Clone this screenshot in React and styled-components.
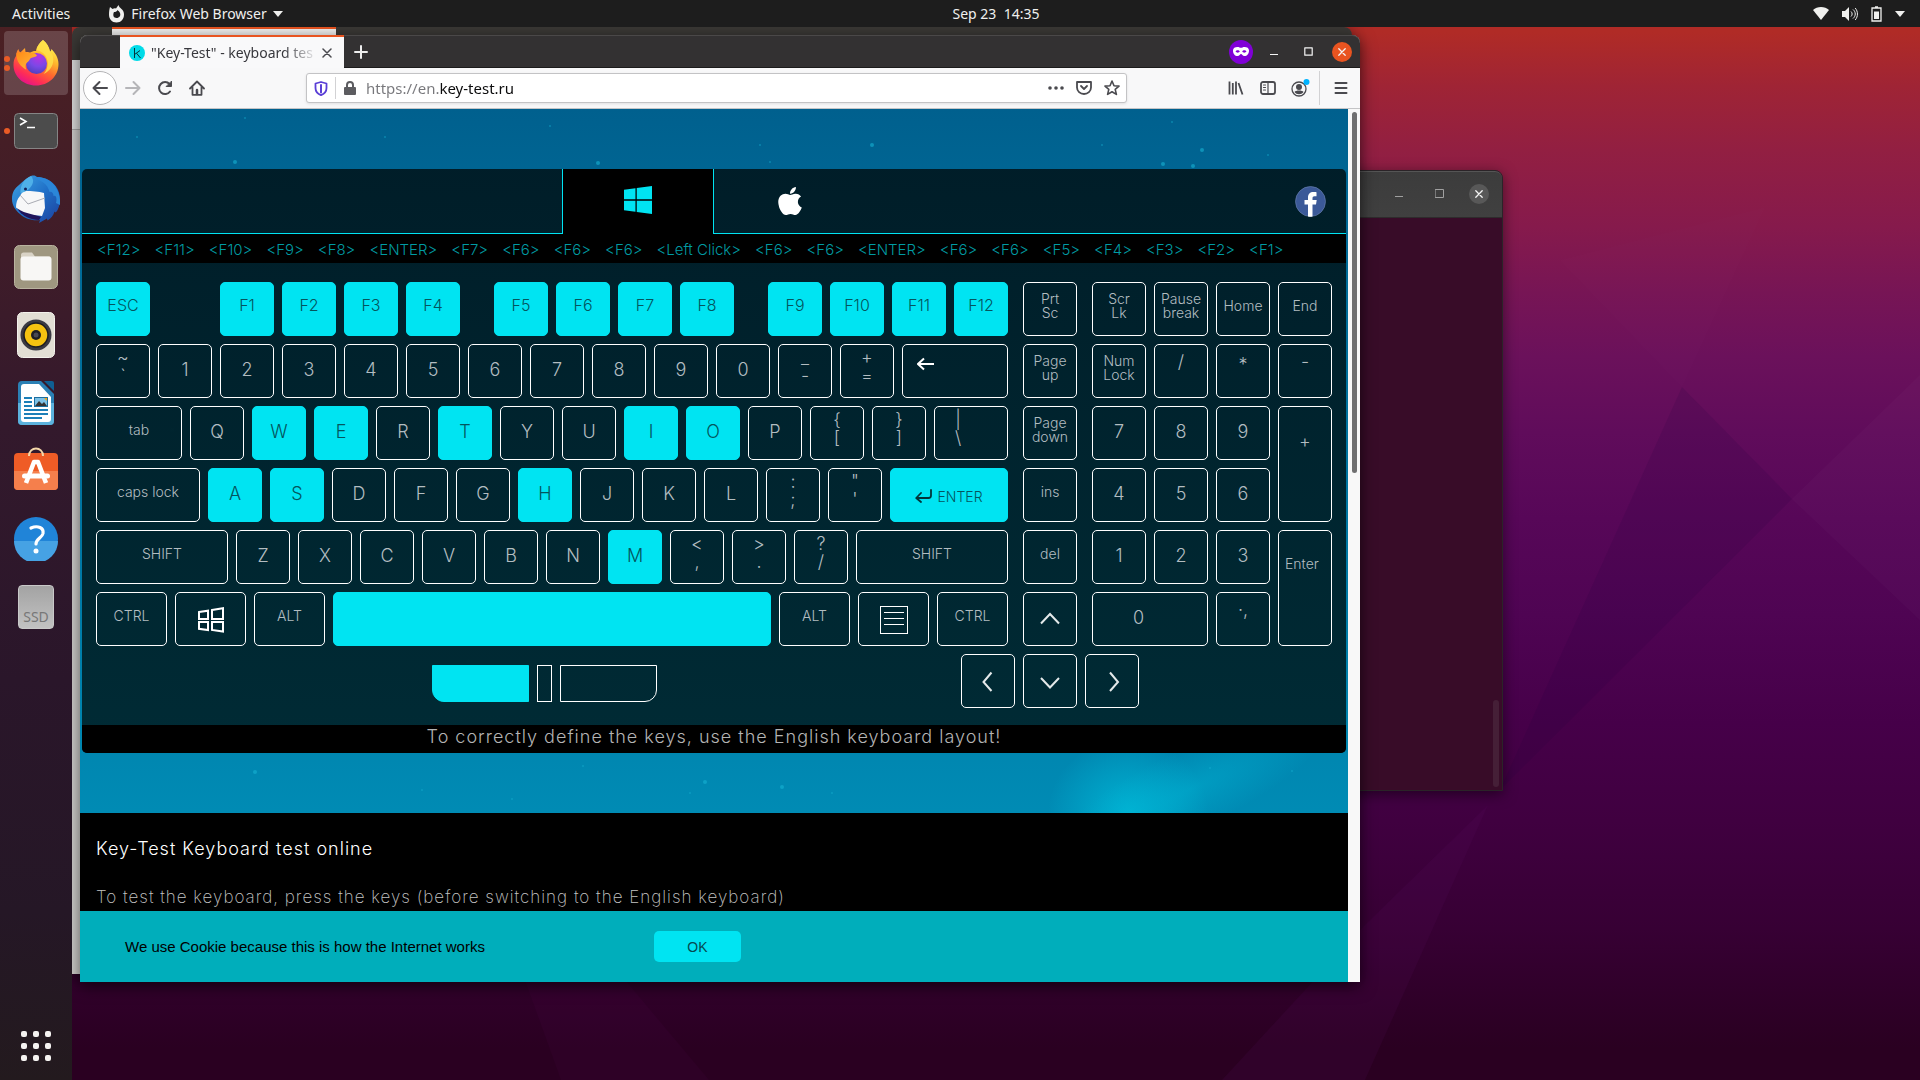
import React from "react";
import styled, { createGlobalStyle, css } from "styled-components";
import { FaWindows, FaApple } from "react-icons/fa";

const CYAN = "#00e4f2";
const UI = `"Noto Sans", "Open Sans", sans-serif`;
const LIGHT = `Inter, "Liberation Sans", sans-serif`;

const Global = createGlobalStyle`
  *, *::before, *::after { box-sizing: border-box; }
  html, body { margin: 0; padding: 0; }
  body { font-family: ${UI}; background: #2b0021; }
  button, input { font: inherit; color: inherit; margin: 0; padding: 0; border: 0; background: none; }
  h1, p { margin: 0; font-weight: inherit; }
  svg { display: block; flex: none; }
`;

/* ---------- desktop ---------- */

const Desktop = styled.div`
  position: relative;
  display: flex;
  flex-direction: column;
  min-height: 100vh;
  overflow: hidden;
  background: linear-gradient(
    #b02b26 3%,
    #9f2435 8%,
    #921f42 14%,
    #861a4c 21%,
    #771555 27%,
    #6b115b 33%,
    #600c5b 40%,
    #570758 48%,
    #4f0453 57%,
    #460049 67%,
    #400040 76%,
    #370034 86%,
    #2a0021 97%
  );
`;

const Wallpaper = styled.svg`
  position: absolute;
  inset: 0;
  width: 100%;
  height: 100%;
`;

const TopBar = styled.header`
  position: relative;
  display: grid;
  grid-template-columns: 1fr auto 1fr;
  align-items: center;
  height: 27px;
  padding: 0 15px 0 12px;
  background: #1d1d1d;
  color: #f0f0ee;
  font-size: 14px;
  line-height: 20px;
  z-index: 3;
`;

const BarGroup = styled.div`
  display: flex;
  align-items: center;
  justify-content: ${(p) => (p.$end ? "flex-end" : "flex-start")};
  gap: ${(p) => (p.$end ? "13px" : "38px")};
`;

const BarButton = styled.button`
  display: flex;
  align-items: center;
  gap: 6px;
  white-space: nowrap;
`;

const Clock = styled(BarButton)`
  padding-left: 75px;
`;

const Body = styled.div`
  position: relative;
  display: flex;
  flex: 1;
`;

const Dock = styled.nav`
  position: relative;
  z-index: 2;
  display: flex;
  flex-direction: column;
  align-items: center;
  gap: 4px;
  width: 72px;
  padding: 4px 4px 2px;
  background: linear-gradient(#4b2023, #3f1c29 22%, #33192c 38%, #2a162a 62%, #251726 84%, #231a1e);
`;

const DockItem = styled.button`
  position: relative;
  display: flex;
  align-items: center;
  justify-content: center;
  width: 64px;
  height: 64px;
  border-radius: 4px;
  background: ${(p) => (p.$active ? "rgba(255,255,255,0.17)" : "transparent")};
  margin-top: ${(p) => (p.$last ? "auto" : "0")};
`;

const Pips = styled.span`
  position: absolute;
  left: 0;
  display: flex;
  flex-direction: column;
  gap: 3px;
`;

const Pip = styled.span`
  width: 6px;
  height: 6px;
  border-radius: 50%;
  background: #ea5b26;
`;

const Workspace = styled.main`
  position: relative;
  flex: 1;
`;

/* ---------- windows ---------- */

const BackWindow = styled.section`
  position: absolute;
  inset: 0 568px 106px 0;
  border-radius: 8px 8px 0 0;
  background: linear-gradient(#3a3835 33px, #dcdcdc 33px, #dcdcdc 102px, #a8a8a8 102px, #a8a8a8 103px, #d0cecc 103px);
  box-shadow: 0 3px 14px rgba(0, 0, 0, 0.45);
`;

const BackTab = styled.div`
  width: 224px;
  height: 33px;
  margin-left: 40px;
  border-top: 2px solid #e95420;
  background: #f0efee;
`;

const Terminal = styled.section`
  position: absolute;
  top: 143px;
  right: 417px;
  display: flex;
  flex-direction: column;
  width: 700px;
  height: 621px;
  border: 1px solid #2b2428;
  border-radius: 8px 8px 0 0;
  background: #380c28;
  box-shadow: 0 3px 14px rgba(0, 0, 0, 0.5);
`;

const TerminalBar = styled.div`
  display: flex;
  align-items: center;
  justify-content: flex-end;
  gap: 20px;
  height: 47px;
  padding: 0 13px 2px 0;
  border-bottom: 1px solid #2e2c2c;
  border-radius: 7px 7px 0 0;
  border-top: 1px solid #555;
  background: linear-gradient(#3c3c3c, #404040);
`;

const TerminalMenu = styled.button`
  width: 40px;
  height: 34px;
  margin-right: 10px;
  border: 1px solid #2c2c2c;
  border-radius: 5px;
`;

const TerminalBody = styled.div`
  display: flex;
  flex: 1;
  align-items: flex-end;
  justify-content: flex-end;
  padding: 3px;
`;

const TerminalThumb = styled.div`
  width: 6px;
  height: 87px;
  border-radius: 3px;
  background: #451f37;
`;

const WinButton = styled.button`
  display: flex;
  align-items: center;
  justify-content: center;
  width: 20px;
  height: 20px;
  border-radius: 50%;
  color: ${(p) => p.$ink || "#f4f4f4"};
  background: ${(p) => p.$fill || "transparent"};
`;

const Browser = styled.section`
  position: absolute;
  inset: 8px 560px auto 8px;
  border-radius: 8px 8px 0 0;
  background: #f9f9fa;
  box-shadow: 0 4px 16px rgba(0, 0, 0, 0.6);
`;

const TitleBar = styled.div`
  display: flex;
  align-items: stretch;
  height: 33px;
  padding-left: 40px;
  border-radius: 8px 8px 0 0;
  background: #333132;
  box-shadow: inset 0 1px 0 #4a4848, inset 0 -1px 0 #1c1b1b;
`;

const Tab = styled.div`
  display: flex;
  align-items: center;
  gap: 6px;
  width: 224px;
  padding: 0 9px;
  border-top: 2px solid #e95420;
  background: #f9f9fa;
  color: #38383d;
  font-size: 14px;
`;

const TabTitle = styled.span`
  flex: 1;
  white-space: nowrap;
  line-height: 20px;
  mask-image: linear-gradient(90deg, #000 82%, rgba(0, 0, 0, 0.15) 100%);
`;

const IconButton = styled.button`
  display: flex;
  align-items: center;
  justify-content: center;
  width: ${(p) => p.$w || 32}px;
  color: ${(p) => p.$ink || "#4a4a4f"};
`;

const WinControls = styled.div`
  display: flex;
  align-items: center;
  gap: 14px;
  margin-left: auto;
  padding-right: 8px;
`;

const Mask = styled.span`
  display: flex;
  align-items: center;
  justify-content: center;
  width: 24px;
  height: 24px;
  margin-right: -3px;
  border-radius: 50%;
  background: #8000d7;
`;

const NavBar = styled.div`
  display: flex;
  align-items: center;
  height: 41px;
  padding: 0 3px;
  border-bottom: 1px solid #c4c4c6;
  background: #f8f8f9;
`;

const BackButton = styled(IconButton)`
  width: 34px;
  height: 34px;
  border: 1px solid #b4b4b6;
  border-radius: 50%;
  background: #fff;
`;

const UrlBar = styled.label`
  display: flex;
  flex: 1;
  align-items: center;
  height: 30px;
  margin: 0 93px;
  border: 1px solid #c3c3c5;
  border-radius: 3px;
  background: #fff;
  box-shadow: 0 1px 3px rgba(0, 0, 0, 0.1);
`;

const UrlInput = styled.input`
  flex: 1;
  min-width: 0;
  height: 26px;
  padding-left: 2px;
  outline: 0;
  font-size: 15px;
  color: transparent;
  background: linear-gradient(90deg, #77777b 75px, #0c0c0d 75px);
  background-clip: text;
`;

const Divider = styled.span`
  width: 1px;
  height: ${(p) => p.$h}px;
  margin: ${(p) => p.$margin || "0"};
  background: #d2d2d4;
`;

const Viewport = styled.div`
  display: flex;
`;

const Page = styled.div`
  position: relative;
  flex: 1;
  min-width: 0;
  background: linear-gradient(#00608e, #006a97 15%, #007aa6 55%, #008cb5 82%);
`;

const Dust = styled.svg`
  position: absolute;
  inset: 0;
  width: 100%;
  height: 704px;
`;

const ScrollTrack = styled.div`
  width: 12px;
  padding: 3px 3px 0 4px;
  background: #f8f8f8;
`;

const ScrollThumb = styled.div`
  height: 361px;
  border-radius: 3px;
  background: #6f6f70;
`;

/* ---------- tester ---------- */

const Panel = styled.section`
  position: relative;
  margin: 60px 2px;
  border-radius: 5px;
  overflow: hidden;
  background: linear-gradient(rgba(0, 27, 37, 0.97), rgba(0, 40, 49, 0.97));
  font-family: ${LIGHT};
`;

const OsTabs = styled.div`
  display: grid;
  grid-template-columns: 480fr 152px 632fr;
  height: 65px;
`;

const OsSide = styled.div`
  display: flex;
  align-items: center;
  justify-content: space-between;
  padding: 0 20px 0 60px;
  border-bottom: 1px solid ${CYAN};
`;

const OsActive = styled.button`
  display: flex;
  align-items: center;
  justify-content: center;
  padding-bottom: 3px;
  border: solid ${CYAN};
  border-width: 0 1px;
  background: #000;
  color: ${CYAN};
`;

const PlainButton = styled.button`
  color: #fff;
`;

const History = styled.div`
  display: flex;
  align-items: center;
  gap: 14px;
  height: 29px;
  padding: 3px 15px 0;
  overflow: hidden;
  background: #000;
  color: #009ba3;
  font-size: 15px;
  font-weight: 300;
  line-height: 20px;
  white-space: nowrap;
`;

const Board = styled.div`
  display: flex;
  flex-direction: column;
  gap: 8px;
  padding: 19px 14px 17px;
`;

const Blocks = styled.div`
  display: flex;
  gap: 15px;
`;

const MainBlock = styled.div`
  display: flex;
  flex: 1;
  flex-direction: column;
  gap: 8px;
  min-width: 0;
`;

const Column = styled.div`
  display: flex;
  flex-direction: column;
  gap: 8px;
  width: 54px;
`;

const NumPad = styled.div`
  display: grid;
  grid-template-columns: repeat(4, 54px);
  grid-auto-rows: 54px;
  gap: 8px;
`;

const Row = styled.div`
  display: flex;
  gap: 8px;
`;

const keySizes = {
  letter: css`
    font-size: 18px;
    line-height: 20px;
    padding-bottom: 3px;
  `,
  fn: css`
    font-size: 16px;
    line-height: 20px;
    padding-bottom: 8px;
  `,
  word: css`
    font-size: 14px;
    line-height: 14px;
    padding-bottom: 6px;
  `,
  pair: css`
    font-size: 18px;
    line-height: 18px;
    padding-bottom: 8px;
  `,
  icon: css`
    font-size: 14px;
    padding-top: 2px;
  `,
};

const KeyCap = styled.button`
  display: flex;
  flex: ${(p) => p.$w} 1 ${(p) => p.$w}px;
  align-items: ${(p) => (p.$top ? "flex-start" : "center")};
  justify-content: ${(p) => (p.$left ? "flex-start" : "center")};
  gap: 5px;
  min-width: 0;
  height: ${(p) => (p.$tall ? "auto" : "54px")};
  border: 1px solid ${(p) => (p.$on ? CYAN : "#fff")};
  border-radius: 5px;
  background: ${(p) => (p.$on ? CYAN : "transparent")};
  color: ${(p) => (p.$on ? "#04555d" : "#b3bdc1")};
  font-weight: 300;
  text-align: center;
  white-space: pre-line;
  ${(p) => keySizes[p.$size]}
  ${(p) => p.$left && css`padding-left: ${p.$left}px;`}
  ${(p) => p.$top && css`padding-top: ${p.$top}px;`}
  ${(p) => p.$wide && css`grid-column: span 2;`}
  ${(p) => p.$tall && css`grid-row: span 2;`}
`;

const Space = styled.span`
  flex: ${(p) => p.$w} 1 ${(p) => p.$w}px;
`;

const LowerRow = styled.div`
  display: flex;
  align-items: center;
  justify-content: space-between;
  padding: 0 193px 0 336px;
`;

const Mouse = styled.div`
  display: flex;
  gap: 8px;
  padding-top: 5px;
`;

const MouseButton = styled.button`
  width: ${(p) => p.$w}px;
  height: 37px;
  border: 1px solid ${(p) => (p.$on ? CYAN : "#fff")};
  border-radius: ${(p) => p.$round || "0"};
  background: ${(p) => (p.$on ? CYAN : "transparent")};
`;

const Arrows = styled.div`
  display: grid;
  grid-template-columns: repeat(3, 54px);
  gap: 8px;
`;

const Notice = styled.p`
  height: 28px;
  background: #000;
  color: #b4b4b4;
  font-size: 18px;
  font-weight: 300;
  line-height: 24px;
  letter-spacing: 1px;
  text-align: center;
`;

const Article = styled.article`
  position: relative;
  display: flex;
  flex-direction: column;
  gap: 24px;
  padding: 24px 16px 2px;
  background: #000;
  color: #c4c4c4;
  font-family: ${LIGHT};
  font-size: 17px;
  font-weight: 200;
  line-height: 24px;
  letter-spacing: 1px;
`;

const Title = styled.h1`
  color: #fff;
  font-size: 18px;
  font-weight: 300;
  line-height: 24px;
`;

const CookieBar = styled.div`
  position: relative;
  display: flex;
  align-items: center;
  gap: 169px;
  height: 71px;
  padding-left: 45px;
  background: #00aebb;
  color: #000;
  font-family: "Liberation Sans", Arial, sans-serif;
  font-size: 15px;
`;

const OkButton = styled.button`
  width: 87px;
  height: 31px;
  border-radius: 5px;
  background: ${CYAN};
  color: #064a50;
  font-size: 14px;
`;

/* ---------- glyphs ---------- */

const Stroke = ({ w = 16, h = w, sw = 2, box, children, ...rest }) => (
  <svg width={w} height={h} viewBox={box || `0 0 ${w} ${h}`} fill="none" stroke="currentColor" strokeWidth={sw} strokeLinecap="round" strokeLinejoin="round" aria-hidden="true" {...rest}>
    {children}
  </svg>
);

const CloseGlyph = ({ size = 8, sw = 1.3 }) => (
  <Stroke w={size} sw={sw} box="0 0 8 8"><path d="M.8.8l6.4 6.4M7.2.8L.8 7.2" /></Stroke>
);

const Caret = () => (
  <svg width="10" height="6" viewBox="0 0 10 6" aria-hidden="true"><path d="M0 0h10L5 6z" fill="#f0f0ee" /></svg>
);

const chevrons = {
  up: "M1 14.500L10 5l9 9.500",
  down: "M1 7L10 16.500 19 7",
  left: "M13.500 1.500L5.500 11l8 9",
  right: "M8 1.500L16 11l-8 9",
};

const Chevron = ({ to }) => (
  <Stroke w={20} h={22} sw={2}><path d={chevrons[to]} stroke="#e4e9ea" strokeLinecap="butt" strokeLinejoin="miter" /></Stroke>
);

const FirefoxIcon = () => (
  <svg width="48" height="48" viewBox="0 0 48 48" aria-hidden="true">
    <defs>
      <linearGradient id="ffBody" x1=".8" y1=".1" x2=".3" y2="1">
        <stop offset="0" stopColor="#fff44f" /><stop offset=".3" stopColor="#ffb42c" /><stop offset=".55" stopColor="#ff6a2e" /><stop offset=".8" stopColor="#ff2d56" /><stop offset="1" stopColor="#e3128c" />
      </linearGradient>
      <radialGradient id="ffGlobe" cx=".6" cy=".2" r=".9"><stop offset="0" stopColor="#b833e1" /><stop offset=".5" stopColor="#7b48e6" /><stop offset="1" stopColor="#473fb5" /></radialGradient>
      <linearGradient id="ffHead" x1="0" y1="0" x2="1" y2="1"><stop offset="0" stopColor="#ff8a16" /><stop offset="1" stopColor="#ffbd3e" /></linearGradient>
    </defs>
    <path fill="url(#ffBody)" d="M31 1c4 3 6 7 7 11.500 1-.5 1.300-1.500 1.300-2.500C43.500 14 46.500 19 46.500 25c0 12.500-10 21.500-22.500 21.500S1.500 37.500 1.500 26c0-4 .7-6.500 2.500-9 .2-2.500.8-5 2.500-7 .2 1.700.8 2.700 1.800 3.500L13 9l.5 4c1.500 0 3 0 4.500.8 2-1.500 4-2 6-1.800C24.500 7.500 27.500 4 31 1z" />
    <circle cx="24.500" cy="24.500" r="10.500" fill="url(#ffGlobe)" />
    <path fill="url(#ffHead)" d="M4.500 14C9 13 13 13 16 14c3.500-.5 7.500 0 9 2.500-1 1.800-4 1.500-6 2.600-1.400 1-1.100 2.600-3.600 4.100-1.500 1.200-2.600 3.600-1.100 7.500C9 27.500 4 23 4.500 14z" />
    <path fill="#ffe04a" opacity=".85" d="M31 1c-3 2.500-6 6-6.500 10 5 1 10 4.500 11 11 .8 5-1 10-4 13 7-3 11-10 9.500-17-.5-2.500-1.500-4-3-5.500C37 8 35 4 31 1z" />
  </svg>
);

const TerminalIcon = () => (
  <svg width="44" height="36" viewBox="0 0 44 36" aria-hidden="true">
    <rect x=".5" y=".5" width="43" height="35" rx="4" fill="#4c4c4c" stroke="#858585" />
    <path d="M6 5l6 3.500L6 12M13 14.500h8" fill="none" stroke="#fff" strokeWidth="1.600" />
  </svg>
);

const ThunderbirdIcon = () => (
  <svg width="48" height="48" viewBox="0 0 48 48" aria-hidden="true">
    <defs>
      <linearGradient id="tb" x1="0" y1="0" x2="1" y2="1"><stop offset="0" stopColor="#3fa4e2" /><stop offset=".5" stopColor="#2070c8" /><stop offset="1" stopColor="#1c3f9c" /></linearGradient>
    </defs>
    <path fill="url(#tb)" d="M19 1c3-1 5 0 6 1 12 0 23 9 23 22 0 4-.6 7-2 10-.6 1.500-1.200 2.500-2.500 3.500l-1-1c-1 4-3.500 7-7 9l-.5-2-8 4.500 1-3c-7 1-15-1-20-6C3 35 0 30 0 24c0-7 3-11 7-14 4-4 8-7 12-9z" />
    <path fill="#20155c" d="M5 33l24 9-2 3c-8 0-18-4-22-12z" />
    <path fill="#f7f7f8" d="M8 21c1-2 3-5 5-5 7 0 14 .5 19 2l1 15-3 8C20 40 9 37 4 32.500 4 28 5 24 8 21z" />
    <path fill="none" stroke="#a9abb3" d="M8 20l8 9 17-6" />
    <path fill="#4fb0e8" d="M19 1c-7 3-11 9-10.500 17C14 17 20 13 21 7c.3-2 0-4-2-6z" />
    <path fill="#2b86d8" d="M20 4c8 0 16 5 17.500 13 2-1 4 1 4 4 3-1 3.500 3 2.500 7l4 2c1-12-5-24-17-27-3-1-7-1-11 1z" />
    <circle cx="13.500" cy="14" r="1.500" fill="#12205a" />
  </svg>
);

const FilesIcon = () => (
  <svg width="44" height="44" viewBox="0 0 44 44" aria-hidden="true">
    <rect x=".5" y=".5" width="43" height="43" rx="5" fill="#9f9780" stroke="#b9b39f" />
    <path d="M7 10c0-1.500 1-2.500 2.500-2.500H18l3 4h15v10H7z" fill="#d9d3c6" />
    <rect x="6.500" y="11.500" width="31" height="24" rx="3" fill="#f8f7f5" />
  </svg>
);

const MusicIcon = () => (
  <svg width="38" height="46" viewBox="0 0 38 46" aria-hidden="true">
    <rect x=".5" y=".5" width="37" height="45" rx="5" fill="#e2ded4" stroke="#f3f1ec" />
    <circle cx="19" cy="23" r="15.500" fill="#3b3a43" />
    <circle cx="19" cy="23" r="12" fill="#f5c211" stroke="#1d1d22" strokeWidth="1.500" />
    <circle cx="19" cy="23" r="5" fill="#1e1e24" />
    <circle cx="19" cy="23" r="2.500" fill="#494953" />
  </svg>
);

const WriterIcon = () => (
  <svg width="36" height="44" viewBox="0 0 36 44" aria-hidden="true">
    <path d="M4 0h19l13 13v27a4 4 0 0 1-4 4H4a4 4 0 0 1-4-4V4a4 4 0 0 1 4-4z" fill="#2b80b5" />
    <path d="M0 22h36v18a4 4 0 0 1-4 4H4a4 4 0 0 1-4-4z" fill="#5cb2dd" />
    <path d="M26 0h8a2 2 0 0 1 2 2v8z" fill="#0f5f93" />
    <path d="M6 3h15l12 13v22a3 3 0 0 1-3 3H6a3 3 0 0 1-3-3V6a3 3 0 0 1 3-3z" fill="#fff" />
    <path d="M6 17h8M6 21h8M6 25h8M6 29h24M6 33h24M6 37h18" stroke="#1c7fb8" strokeWidth="2" />
    <rect x="16.500" y="16.500" width="13" height="9" fill="#7cc1e6" stroke="#1c6e9f" />
    <path d="M17 25l4-5 3 3 2-2 3 4z" fill="#333" /><path d="M26 17h3v3z" fill="#f0a61a" />
  </svg>
);

const SoftwareIcon = () => (
  <svg width="44" height="48" viewBox="0 0 44 48" aria-hidden="true">
    <rect y="6" width="44" height="37" rx="4" fill="#ef5c26" />
    <path d="M0 24h44v15a4 4 0 0 1-4 4H4a4 4 0 0 1-4-4z" fill="#f57f4c" />
    <path d="M15 9c0-10 14-10 14 0" fill="none" stroke="#f4d7a9" strokeWidth="2" />
    <path d="M12 36l8-21h4l8 21" fill="none" stroke="#fff" strokeWidth="4.500" strokeLinejoin="round" />
    <rect x="8" y="26.500" width="28" height="5" rx="2.500" fill="#fff" />
  </svg>
);

const HelpIcon = () => (
  <svg width="44" height="44" viewBox="0 0 44 44" aria-hidden="true">
    <circle cx="22" cy="22" r="22" fill="#2084d8" />
    <path d="M0 24a22 22 0 0 0 44 0z" fill="#46a2e4" />
    <path d="M17 11c7-3 13 0 12 5.500-1 4.500-7 5-7 10.500" fill="none" stroke="#fff" strokeWidth="3.200" strokeLinecap="round" />
    <circle cx="22" cy="34" r="2.500" fill="#fff" />
  </svg>
);

const Disk = styled.span`
  display: flex;
  align-items: flex-end;
  justify-content: center;
  width: 36px;
  height: 44px;
  border: 1px solid #c9c9c9;
  border-radius: 4px;
  background: linear-gradient(#a3a3a3, #c2c2c2);
  color: #777;
  font-size: 14px;
  line-height: 22px;
`;

const GridIcon = () => (
  <svg width="30" height="30" viewBox="0 0 30 30" fill="#f5f3f1" aria-hidden="true">
    {[0, 12, 24].map((y) => [0, 12, 24].map((x) => <rect key={`${x}-${y}`} x={x} y={y} width="6" height="6" rx="2" />))}
  </svg>
);

const FacebookIcon = () => (
  <svg width="31" height="31" viewBox="0 0 31 31" aria-hidden="true">
    <circle cx="15.500" cy="15.500" r="15" fill="#3b5998" stroke="#6f86b5" strokeWidth=".6" />
    <path fill="#fff" d="M13 30.400V18.500H9.500V14H13v-2.500C13 8 15 6 18.500 6c1.600 0 3 .2 3 .2v4h-2c-1.500 0-2 .8-2 2V14h4.200l-.7 4.500h-3.500v12c-1.500.3-3 .3-4.500-.1z" />
  </svg>
);

const MenuKeyIcon = () => (
  <svg width="28" height="28" viewBox="0 0 28 28" fill="none" stroke="#fff" aria-hidden="true">
    <rect x=".5" y=".5" width="27" height="27" /><path d="M4 6.500h20M4 12.500h20M4 18.500h20" />
  </svg>
);

const WinKeyIcon = () => (
  <svg width="26" height="26" viewBox="0 0 26 26" fill="none" stroke="#fff" strokeWidth="2" aria-hidden="true">
    <path d="M1 5l9-1.300V12H1zM14 3l11-1.800V12H14zM1 15h9v8L1 21.800zM14 15h11v9.500L14 23z" />
  </svg>
);

/* ---------- data ---------- */

const history = "F12 F11 F10 F9 F8 ENTER F7 F6 F6 F6 Left_Click F6 F6 ENTER F6 F6 F5 F4 F3 F2 F1".split(" ");

const pressed = new Set("ESC F1 F2 F3 F4 F5 F6 F7 F8 F9 F10 F11 F12 W E T I O A S H M".split(" "));

const many = (names, size = "letter") => names.split(" ").map((t) => ({ t, size }));
const pair = (a, b, extra) => ({ t: `${a}\n${b}`, size: "pair", ...extra });

const rows = [
  [...many("ESC", "fn"), { gap: 54 }, ...many("F1 F2 F3 F4", "fn"), { gap: 18 }, ...many("F5 F6 F7 F8", "fn"), { gap: 18 }, ...many("F9 F10 F11 F12", "fn")],
  [pair("~", "`"), ...many("1 2 3 4 5 6 7 8 9 0"), pair("_", "-"), pair("+", "="), { icon: "back", w: 106, left: 14, top: 12, name: "Backspace" }],
  [{ t: "tab", size: "word", w: 86 }, ...many("Q W E R T Y U I O P"), pair("{", "["), pair("}", "]"), pair("|", "\\", { w: 74, left: 20 })],
  [{ t: "caps lock", size: "word", w: 104 }, ...many("A S D F G H J K L"), pair(":", ";"), pair("\"", "'"), { icon: "enter", t: "ENTER", w: 118, on: true }],
  [{ t: "SHIFT", size: "word", w: 132 }, ...many("Z X C V B N M"), pair("<", ","), pair(">", "."), pair("?", "/"), { t: "SHIFT", size: "word", w: 152 }],
  [{ t: "CTRL", size: "word", w: 71 }, { icon: "win", w: 71, name: "Windows" }, { t: "ALT", size: "word", w: 71 }, { w: 438, on: true, name: "Space", size: "word" }, { t: "ALT", size: "word", w: 71 }, { icon: "menu", w: 71, name: "Menu" }, { t: "CTRL", size: "word", w: 71 }],
];

const navKeys = ["Prt\nSc", "Page\nup", "Page\ndown", "ins", "del"];

const padKeys = [
  ...["Scr\nLk", "Pause\nbreak", "Home", "End", "Num\nLock"].map((t) => ({ t, size: "word" })),
  { t: "/", size: "pair", top: 8 }, { t: "*", size: "pair", top: 11 }, { t: "-", size: "pair", top: 8 },
  ...many("7 8 9"), { t: "+", size: "pair", top: 26, tall: true },
  ...many("4 5 6"), ...many("1 2 3"),
  { t: "Enter", size: "word", top: 26, left: 6, tall: true },
  { t: "0", size: "letter", wide: true, left: 40 }, { t: "·,", size: "pair", top: 8 },
];

const icons = {
  back: <Stroke w={18} h={14} sw={2}><path d="M17 7H1M7 1.500L1 7l6 5.500" stroke="#fff" strokeLinecap="butt" strokeLinejoin="miter" /></Stroke>,
  enter: <Stroke w={17} h={14} sw={1.800}><path d="M16 1v5.500c0 2-1 2.500-2.500 2.500H1.500M6 4L1.200 9 6 13" stroke="#03353a" /></Stroke>,
  win: <WinKeyIcon />,
  menu: <MenuKeyIcon />,
  up: <Chevron to="up" />,
  down: <Chevron to="down" />,
  left: <Chevron to="left" />,
  right: <Chevron to="right" />,
};

const Key = ({ t, size, w = 54, on, icon, name, left, top, tall, wide }) => (
  <KeyCap type="button" aria-label={name} $w={w} $size={size || "icon"} $on={on || pressed.has(t)} $left={left} $top={top} $tall={tall} $wide={wide}>
    {icon && icons[icon]}
    {t}
  </KeyCap>
);

const dust = [
  [57, 28, 1], [165, 9, 1], [155, 53, 2], [305, 28, 1], [470, 17, 1], [518, 54, 2], [680, 36, 1], [690, 53, 1], [792, 36, 2],
  [1022, 36, 1], [1092, 13, 1], [1122, 41, 2], [1083, 55, 2], [1113, 57, 2], [1188, 46, 1], [61, 265, 1], [92, 321, 2], [388, 552, 2],
  [175, 663, 2], [342, 681, 1], [503, 657, 1], [625, 673, 2], [702, 678, 2], [752, 684, 1], [432, 690, 1], [1130, 659, 1], [610, 684, 1], [1212, 662, 1],
];

export default function App() {
  return (
    <Desktop>
      <Global />
      <Wallpaper viewBox="0 0 1920 1080" preserveAspectRatio="none" aria-hidden="true">
        <path d="M1500 790L1682 387 1792 499z" fill="#20003a" opacity=".13" />
        <path d="M1682 387L1560 260 1765 207z" fill="#fff" opacity=".008" />
        <path d="M1792 499l128-124v245z" fill="#fff" opacity=".018" />
        <path d="M1488 805L1365 925 1222 1080h143z" fill="#60106a" opacity=".12" />
        <path d="M525 980h100l84 100H561z" fill="#60106a" opacity=".08" />
      </Wallpaper>

      <TopBar>
        <BarGroup>
          <BarButton type="button">Activities</BarButton>
          <BarButton type="button">
            <svg width="17" height="18" viewBox="0 0 17 18" aria-hidden="true">
              <path fill="#f0f0ee" fillRule="evenodd" d="M2 2l2.500 2C6 3 7 3 8 3.500L10.500 0c.5 2 1.500 2.500 3 4 1.500 1.200 2.500 3 2.500 5.500 0 4.500-3 8-7.500 8S1 14 1 9.500C1 6 1.500 4 2 2zm4 5c-1.500 3-.5 6 2.500 6s4.500-2.500 3.500-5c-.6-1.500-1.500-2-2.500-3-.5 1.500-2 2-3.500 2z" />
            </svg>
            Firefox Web Browser
            <Caret />
          </BarButton>
        </BarGroup>
        <Clock type="button">Sep 23&nbsp; 14:35</Clock>
        <BarGroup $end>
          <svg width="16" height="13" viewBox="0 0 16 13" aria-label="Wi-Fi"><path d="M0 3C4-1 12-1 16 3L8 13z" fill="#f0f0ee" /></svg>
          <svg width="16" height="14" viewBox="0 0 16 14" aria-label="Volume"><path d="M0 4h3l4-4v14l-4-4H0z" fill="#f0f0ee" /><path d="M9 4.500c1.500 1.500 1.500 3.500 0 5M11 2.500c3 2.500 3 6.500 0 9M13.200 1c3 3.500 3 8.500 0 12" fill="none" stroke="#f0f0ee" /></svg>
          <svg width="11" height="16" viewBox="0 0 11 16" aria-label="Battery"><path d="M1 2h9v13H1zM4 .8h3" fill="none" stroke="#f0f0ee" strokeWidth="1.300" /><path d="M3 5.500h5V13H3z" fill="#f0f0ee" /></svg>
          <Caret />
        </BarGroup>
      </TopBar>

      <Body>
        <Dock>
          <DockItem type="button" aria-label="Firefox" $active><Pips><Pip /><Pip /></Pips><FirefoxIcon /></DockItem>
          <DockItem type="button" aria-label="Terminal"><Pips><Pip /></Pips><TerminalIcon /></DockItem>
          <DockItem type="button" aria-label="Thunderbird"><ThunderbirdIcon /></DockItem>
          <DockItem type="button" aria-label="Files"><FilesIcon /></DockItem>
          <DockItem type="button" aria-label="Rhythmbox"><MusicIcon /></DockItem>
          <DockItem type="button" aria-label="Writer"><WriterIcon /></DockItem>
          <DockItem type="button" aria-label="Software"><SoftwareIcon /></DockItem>
          <DockItem type="button" aria-label="Help"><HelpIcon /></DockItem>
          <DockItem type="button"><Disk>SSD</Disk></DockItem>
          <DockItem type="button" aria-label="Show applications" $last><GridIcon /></DockItem>
        </Dock>

        <Workspace>
          <Terminal>
            <TerminalBar>
              <TerminalMenu type="button" aria-label="Menu" />
              <WinButton type="button" aria-label="Minimize" $ink="#a0a0a0"><Stroke w={8} sw={1}><path d="M0 6.500h8" /></Stroke></WinButton>
              <WinButton type="button" aria-label="Maximize" $ink="#a0a0a0"><Stroke w={9} sw={1}><rect x=".5" y=".5" width="8" height="8" /></Stroke></WinButton>
              <WinButton type="button" aria-label="Close" $fill="#585858"><CloseGlyph /></WinButton>
            </TerminalBar>
            <TerminalBody><TerminalThumb /></TerminalBody>
          </Terminal>

          <BackWindow><BackTab /></BackWindow>

          <Browser>
            <TitleBar>
              <Tab>
                <svg width="16" height="16" viewBox="0 0 16 16" aria-hidden="true"><circle cx="8" cy="8" r="8" fill="#00dbe8" /><path d="M5.500 3v10M11 5.500L5.800 9.300M7.500 8.200l4 4.800" stroke="#06333a" fill="none" /></svg>
                <TabTitle>"Key-Test" - keyboard tes</TabTitle>
                <IconButton type="button" aria-label="Close tab" $w={16}><CloseGlyph size={10} sw={1.2} /></IconButton>
              </Tab>
              <IconButton type="button" aria-label="New tab" $w={34} $ink="#eee"><Stroke w={14} sw={2}><path d="M7 1v12M1 7h12" /></Stroke></IconButton>
              <WinControls>
                <Mask><svg width="16" height="9" viewBox="0 0 16 9" aria-label="Private browsing"><path fill="#fff" fillRule="evenodd" d="M0 3.500C0 1 2 0 4.500 0 6 0 7 .8 8 .8S10 0 11.500 0C14 0 16 1 16 3.500 16 7 14 9 11.500 9 9.500 9 9 7 8 7S6.500 9 4.500 9C2 9 0 7 0 3.500zM2.500 4.500C3.500 6 6 6 6.800 4.500 6 2.800 3.500 2.800 2.500 4.500zM9.200 4.500c.8 1.500 3.300 1.500 4.300 0-1-1.700-3.500-1.700-4.300 0z" /></svg></Mask>
                <WinButton type="button" aria-label="Minimize"><Stroke w={8} sw={1.200}><path d="M0 6.500h8" /></Stroke></WinButton>
                <WinButton type="button" aria-label="Maximize"><Stroke w={9} sw={1.200}><rect x=".8" y=".8" width="7.400" height="7.400" /></Stroke></WinButton>
                <WinButton type="button" aria-label="Close" $fill="#e95420"><CloseGlyph /></WinButton>
              </WinControls>
            </TitleBar>

            <NavBar>
              <BackButton type="button" aria-label="Back"><Stroke w={16}><path d="M15 8H1.500M7.500 2l-6 6 6 6" /></Stroke></BackButton>
              <IconButton type="button" aria-label="Forward" $ink="#b5b5b8"><Stroke w={16}><path d="M1 8h13.500M8.500 2l6 6-6 6" /></Stroke></IconButton>
              <IconButton type="button" aria-label="Reload"><Stroke w={16}><path d="M13 11.500A6 6 0 1 1 12.500 4" /><path d="M14.500 1.500v5h-5z" fill="currentColor" strokeWidth="1" /></Stroke></IconButton>
              <IconButton type="button" aria-label="Home"><Stroke w={16} sw={1.800}><path d="M1 8.500L8 1.500l7 7M3.500 7.500v7.300h9V7.500" /><path d="M8 14v-4" strokeWidth="2.500" /></Stroke></IconButton>
              <UrlBar>
                <IconButton type="button" aria-label="Protection" $w={28} $ink="#5a3fd6"><Stroke w={14} h={15} sw={1.800}><path d="M1.500 2.500L7 1l5.500 1.500V7c0 3.500-2 5.800-5.500 7.200C3.500 12.800 1.500 10.500 1.500 7z" /><path d="M7 4v7.500" strokeWidth="2" /></Stroke></IconButton>
                <Divider $h={22} />
                <IconButton type="button" aria-label="Site information" $w={28} $ink="#5c5c60"><svg width="12" height="14" viewBox="0 0 12 14" aria-hidden="true"><rect y="6" width="12" height="8" rx="1" fill="currentColor" /><path d="M3 7V4a3 3 0 0 1 6 0v3" fill="none" stroke="currentColor" strokeWidth="2" /></svg></IconButton>
                <UrlInput aria-label="Address" defaultValue="https://en.key-test.ru" />
                <IconButton type="button" aria-label="Page actions" $w={28}><svg width="16" height="4" viewBox="0 0 16 4" fill="currentColor" aria-hidden="true"><circle cx="2" cy="2" r="1.800" /><circle cx="8" cy="2" r="1.800" /><circle cx="14" cy="2" r="1.800" /></svg></IconButton>
                <IconButton type="button" aria-label="Save to Pocket" $w={28}><Stroke w={16} h={14} sw={1.800}><path d="M1 1h14v5.500a7 6.500 0 0 1-14 0zM5 5l3 3 3-3" /></Stroke></IconButton>
                <IconButton type="button" aria-label="Bookmark" $w={28}><Stroke w={16} sw={1.600}><path d="M8 1l2 4.700 5 .4-3.800 3.300 1.200 5L8 11.700l-4.400 2.700 1.200-5L1 6.100l5-.4z" /></Stroke></IconButton>
              </UrlBar>
              <IconButton type="button" aria-label="Library"><Stroke w={16} sw={1.800}><path d="M1.500 1.500v13M4.800 3v11.500M8 1.500v13M10.500 3l4 11.500" strokeLinecap="butt" /></Stroke></IconButton>
              <IconButton type="button" aria-label="Sidebar"><Stroke w={16} h={14} sw={1.800}><rect x="1" y="1" width="14" height="12" rx="2" /><path d="M8 1v12M3.500 4h2M3.500 6.500h2M3.500 9h2" strokeWidth="1.200" /></Stroke></IconButton>
              <IconButton type="button" aria-label="Account"><svg width="20" height="20" viewBox="0 0 20 20" aria-hidden="true"><circle cx="9" cy="11" r="7" fill="none" stroke="#4a4a4f" strokeWidth="1.300" /><circle cx="9" cy="9" r="3" fill="#4a4a4f" /><path d="M4.500 14c1-2 8-2 9 0-2 3-7 3-9 0z" fill="#4a4a4f" /><circle cx="16.500" cy="4" r="3" fill="#00b3ff" /></svg></IconButton>
              <Divider $h={34} $margin="0 5px 0 3px" />
              <IconButton type="button" aria-label="Open menu"><Stroke w={14} h={12} sw={2}><path d="M1.500 1h11M1.500 6h11M1.500 11h11" /></Stroke></IconButton>
            </NavBar>

            <Viewport>
              <Page>
                <Dust viewBox="0 0 1268 704" preserveAspectRatio="none" aria-hidden="true">
                  <defs><radialGradient id="glow"><stop offset="0" stopColor="#00bad9" stopOpacity=".8" /><stop offset="1" stopColor="#00bad9" stopOpacity="0" /></radialGradient></defs>
                  <ellipse cx="1048" cy="704" rx="80" ry="75" fill="url(#glow)" />
                  <ellipse cx="1110" cy="680" rx="150" ry="40" fill="url(#glow)" opacity=".5" transform="rotate(-25 1110 680)" />
                  {dust.map(([x, y, s]) => <circle key={`${x}-${y}`} cx={x} cy={y} r={s} fill="#16b3d3" opacity={s === 2 ? 0.6 : 0.45} />)}
                </Dust>

                <Panel>
                  <OsTabs>
                    <OsSide />
                    <OsActive type="button" aria-label="Windows layout"><FaWindows size={32} /></OsActive>
                    <OsSide>
                      <PlainButton type="button" aria-label="Mac layout"><FaApple size={32} /></PlainButton>
                      <PlainButton type="button" aria-label="Share on Facebook"><FacebookIcon /></PlainButton>
                    </OsSide>
                  </OsTabs>
                  <History>
                    {history.map((name, i) => <span key={i}>{`<${name.replace("_", " ")}>`}</span>)}
                  </History>

                  <Board>
                    <Blocks>
                      <MainBlock>
                        {rows.map((keys, r) => (
                          <Row key={r}>
                            {keys.map((k, i) => (k.gap ? <Space key={i} $w={k.gap} /> : <Key key={i} {...k} />))}
                          </Row>
                        ))}
                      </MainBlock>
                      <Column>
                        {navKeys.map((t) => <Key key={t} t={t} size="word" />)}
                        <Key icon="up" name="Up" />
                      </Column>
                      <NumPad>
                        {padKeys.map((k) => <Key key={k.t} {...k} />)}
                      </NumPad>
                    </Blocks>
                    <LowerRow>
                      <Mouse>
                        <MouseButton type="button" aria-label="Left button" $w={97} $on $round="0 0 0 12px" />
                        <MouseButton type="button" aria-label="Wheel" $w={15} />
                        <MouseButton type="button" aria-label="Right button" $w={97} $round="0 0 12px 0" />
                      </Mouse>
                      <Arrows>
                        <Key icon="left" name="Left" />
                        <Key icon="down" name="Down" />
                        <Key icon="right" name="Right" />
                      </Arrows>
                    </LowerRow>
                  </Board>
                  <Notice>To correctly define the keys, use the English keyboard layout!</Notice>
                </Panel>

                <Article>
                  <Title>Key-Test Keyboard test online</Title>
                  <p>To test the keyboard, press the keys (before switching to the English keyboard)</p>
                </Article>
                <CookieBar>
                  <span>We use Cookie because this is how the Internet works</span>
                  <OkButton type="button">OK</OkButton>
                </CookieBar>
              </Page>
              <ScrollTrack><ScrollThumb /></ScrollTrack>
            </Viewport>
          </Browser>
        </Workspace>
      </Body>
    </Desktop>
  );
}
